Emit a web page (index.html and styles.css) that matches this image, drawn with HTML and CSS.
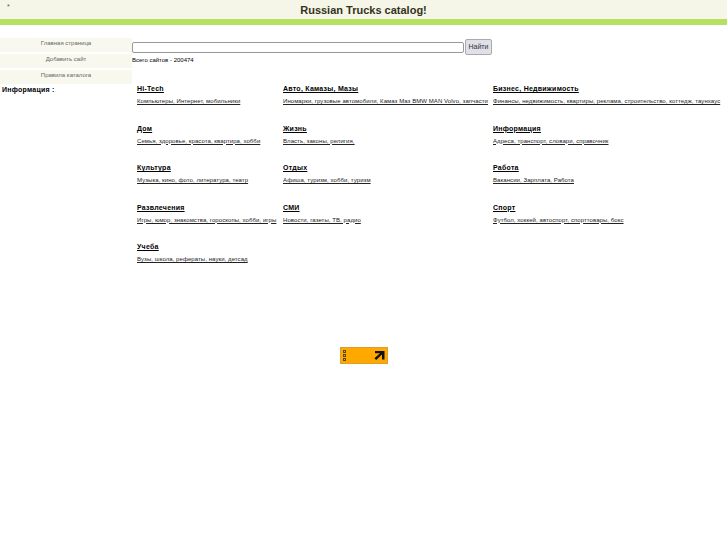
FILE: index.html
```html
<!DOCTYPE html>
<html lang="ru">
<head>
    <meta charset="UTF-8">
    <title>Russian Trucks catalog!</title>
    <link rel="stylesheet" href="styles.css">
</head>
<body>

    <div class="header">
        <span class="star">*</span>
        <h1>Russian Trucks catalog!</h1>
    </div>

    <div class="main">
        <div class="sidebar">
            <a class="menu-item" href="#">Главная страница</a>
            <a class="menu-item" href="#">Добавить сайт</a>
            <a class="menu-item" href="#">Правила каталога</a>
            <div class="info-title">Информация :</div>
        </div>

        <div class="content">
            <form class="search">
                <input class="search-input" type="text">
                <button class="search-button" type="button">Найти</button>
            </form>
            <div class="total">Всего сайтов - 200474</div>

            <div class="catalog">
                <div class="cat"><a class="cat-title" href="#">Hi-Tech</a><a class="cat-text" href="#">Компьютеры, Интернет, мобильники</a></div>
                <div class="cat"><a class="cat-title" href="#">Авто, Камазы, Мазы</a><a class="cat-text" href="#">Иномарки, грузовые автомобили, Камаз Маз BMW MAN Volvo, запчасти</a></div>
                <div class="cat"><a class="cat-title" href="#">Бизнес, Недвижимость</a><a class="cat-text" href="#">Финансы, недвижимость, квартиры, реклама, строительство, коттедж, таунхаус</a></div>

                <div class="cat"><a class="cat-title" href="#">Дом</a><a class="cat-text" href="#">Семья, здоровье, красота, квартира, хобби</a></div>
                <div class="cat"><a class="cat-title" href="#">Жизнь</a><a class="cat-text" href="#">Власть, законы, религия,</a></div>
                <div class="cat"><a class="cat-title" href="#">Информация</a><a class="cat-text" href="#">Адреса, транспорт, словари, справочник</a></div>

                <div class="cat"><a class="cat-title" href="#">Культура</a><a class="cat-text" href="#">Музыка, кино, фото, литература, театр</a></div>
                <div class="cat"><a class="cat-title" href="#">Отдых</a><a class="cat-text" href="#">Афиша, туризм, хобби, туризм</a></div>
                <div class="cat"><a class="cat-title" href="#">Работа</a><a class="cat-text" href="#">Вакансии, Зарплата, Работа</a></div>

                <div class="cat"><a class="cat-title" href="#">Развлечения</a><a class="cat-text" href="#">Игры, юмор, знакомства, гороскопы, хобби, игры</a></div>
                <div class="cat"><a class="cat-title" href="#">СМИ</a><a class="cat-text" href="#">Новости, газеты, ТВ, радио</a></div>
                <div class="cat"><a class="cat-title" href="#">Спорт</a><a class="cat-text" href="#">Футбол, хоккей, автоспорт, спорттовары, бокс</a></div>

                <div class="cat"><a class="cat-title" href="#">Учеба</a><a class="cat-text" href="#">Вузы, школа, рефераты, науки, детсад</a></div>
            </div>
        </div>
    </div>

    <div class="banner-row">
        <a class="banner" href="#">
            <span class="banner-dots"><i></i><i></i><i></i></span>
            <svg class="banner-arrow" width="11" height="10" viewBox="0 0 11 10">
                <path d="M1 1h9.5v8.5H8V4.6L2.2 10 .4 8.2 6 3.3H1z" fill="#111"/>
            </svg>
        </a>
    </div>

</body>
</html>
```

FILE: styles.css
```css
* {
    box-sizing: border-box;
    margin: 0;
    padding: 0;
}

body {
    background: #fff;
    color: #000;
    font-family: "Liberation Sans", Arial, sans-serif;
    font-size: 6px;
}

a {
    color: inherit;
}

.header {
    display: flex;
    justify-content: center;
    align-items: center;
    height: 25px;
    background: #f5f5e8;
    border-bottom: 6px solid #b5e061;
    position: relative;
}

.star {
    position: absolute; /* stray mark over the header */
    top: 3px;
    left: 7px;
    font-size: 7px;
    color: #555;
}

h1 {
    font-size: 11px;
    color: #33331a;
}

.main {
    display: flex;
    padding-top: 13px;
}

.sidebar {
    width: 132px;
    flex-shrink: 0;
}

.menu-item {
    display: block;
    height: 14px;
    line-height: 11px;
    margin-bottom: 2px;
    background: #f8f8ee;
    color: #666;
    text-align: center;
    text-decoration: none;
}

.info-title {
    margin-top: 1px;
    padding-left: 2px;
    font-size: 7px;
    font-weight: bold;
    letter-spacing: 0.25px;
}

.content {
    flex: 1;
    min-width: 0;
}

.search {
    display: flex;
    align-items: center;
    gap: 1px;
    height: 17px;
}

.search-input {
    width: 332px;
    height: 11px;
    margin-top: 1px;
    background: #fff;
    border: 1px solid #999;
    border-radius: 2px;
}

.search-button {
    width: 27px;
    height: 16px;
    font-family: inherit;
    font-size: 7px;
    color: #333;
    background: #e0e0e8;
    border: 1px solid #aaa;
    border-radius: 2px;
}

.total {
    margin-top: 1px;
    height: 9px;
    line-height: 9px;
}

.catalog {
    display: grid;
    grid-template-columns: 146px 210px 1fr;
    grid-auto-rows: 39.5px;
    margin-top: 19px;
    padding-left: 5px;
}

.cat {
    white-space: nowrap;
}

.cat-title {
    display: block;
    width: fit-content;
    height: 13px;
    line-height: 9px;
    font-size: 7px;
    font-weight: bold;
    letter-spacing: 0.25px;
}

.cat-text {
    display: block;
    width: fit-content;
    line-height: 9px;
    letter-spacing: 0.07px;
    color: #222;
}

.banner-row {
    display: flex;
    justify-content: center;
    margin-top: 65px;
}

.banner {
    display: flex;
    justify-content: space-between;
    align-items: center;
    width: 48px;
    height: 17px;
    padding: 0 2px;
    background: #ffa800;
    border: 1px solid #d9a030;
}

.banner-dots {
    display: flex;
    flex-direction: column;
    gap: 1px;
}

.banner-dots i {
    display: block;
    width: 3px;
    height: 3px;
    border: 1px solid #5a4a10;
}
```
